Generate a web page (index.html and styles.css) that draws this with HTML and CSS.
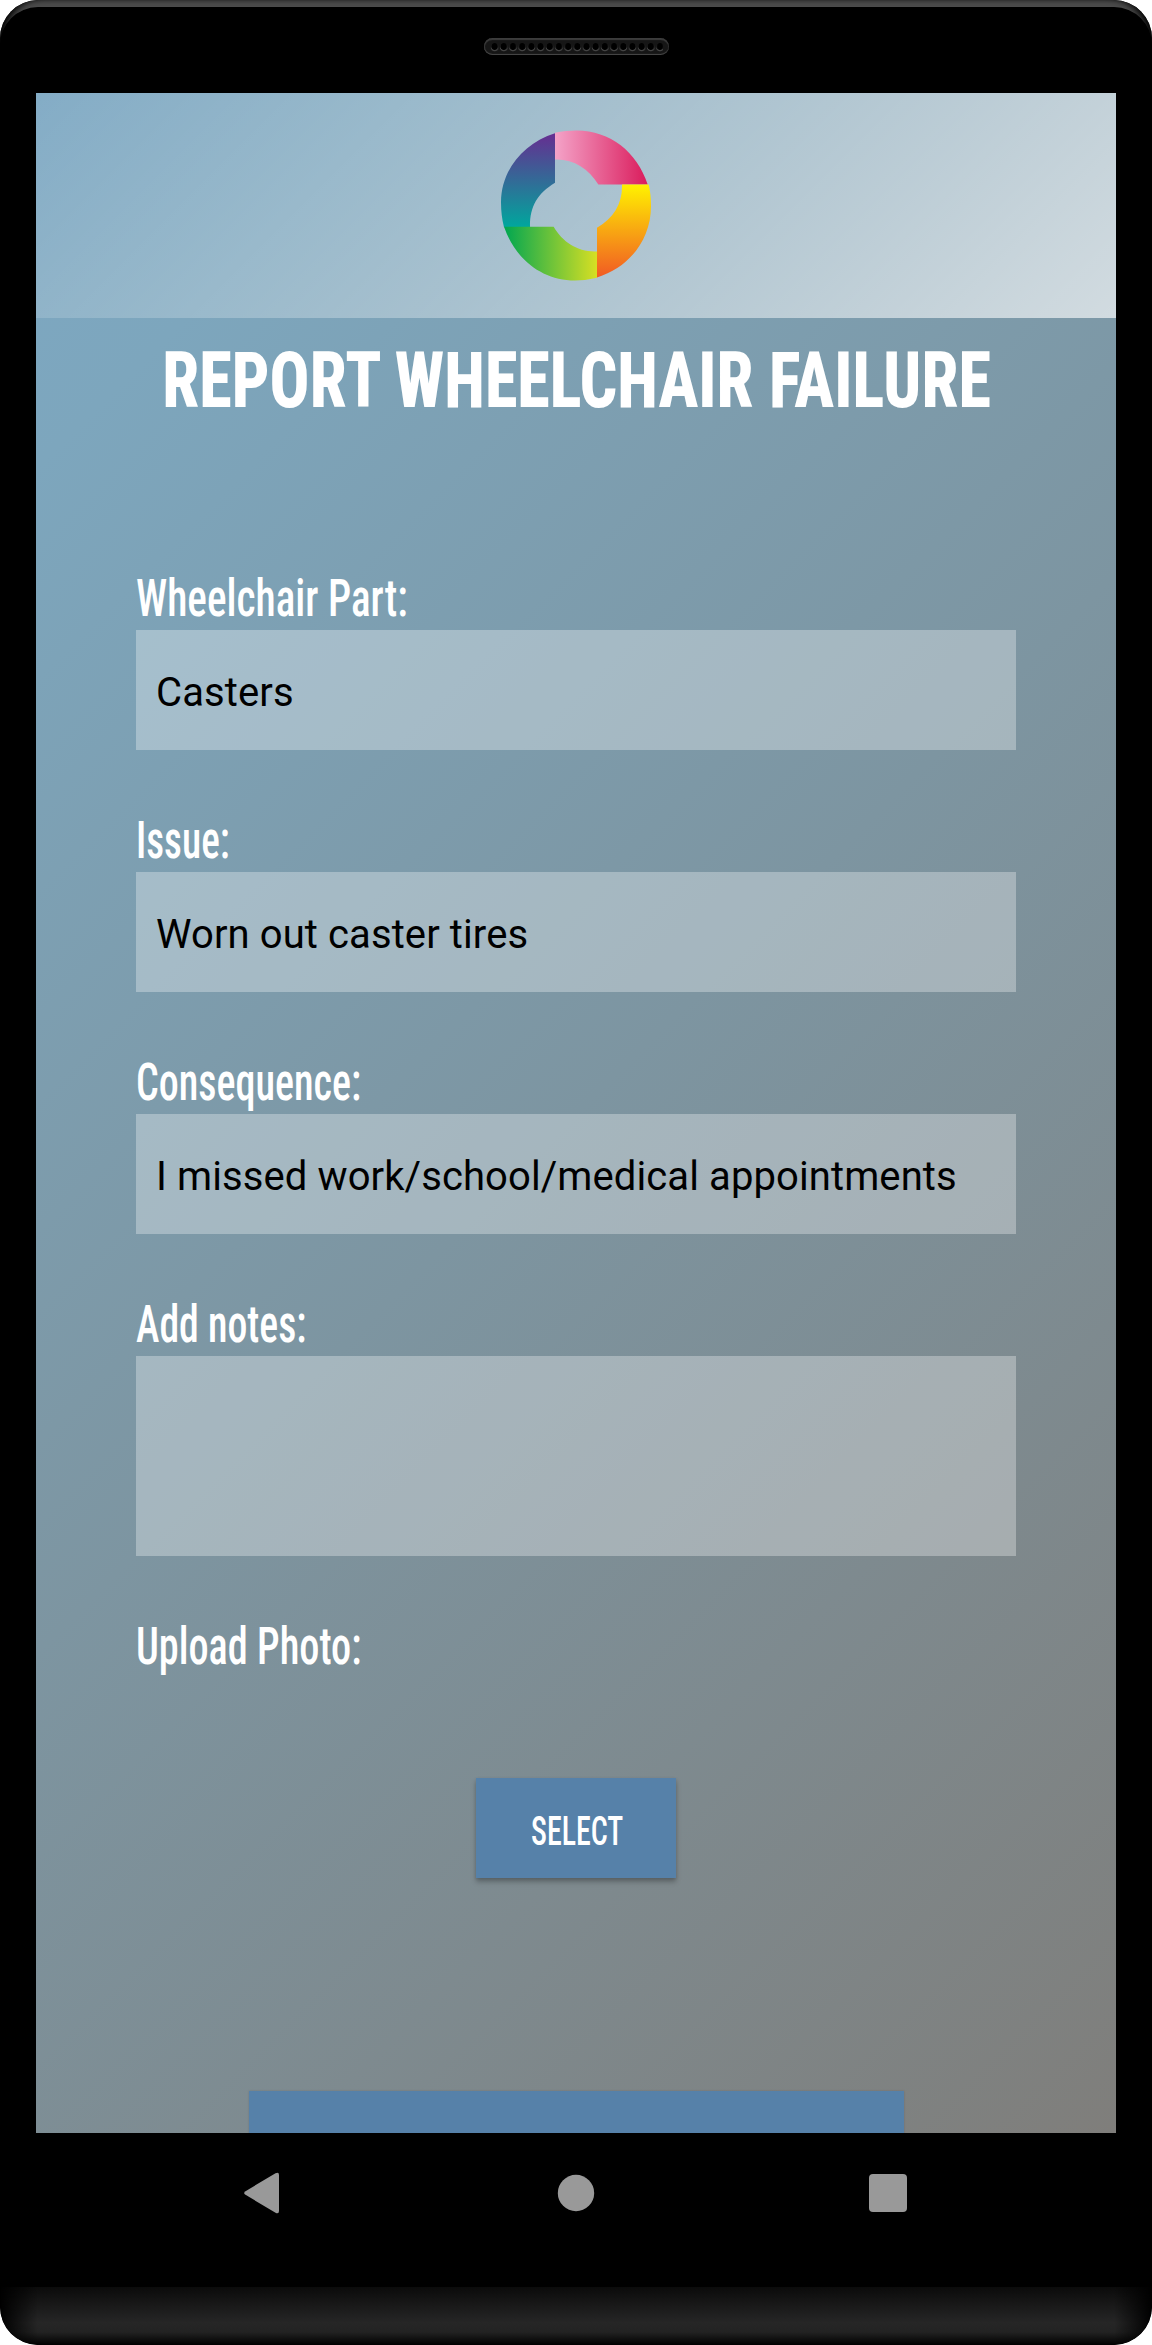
FILE: index.html
```html
<!DOCTYPE html>
<html lang="en">
<head>
<meta charset="utf-8">
<title>Report Wheelchair Failure</title>
<link rel="stylesheet" href="styles.css">
</head>
<body>
<div class="phone">
  <div class="phone-top"><div class="speaker"><div class="speaker-holes"></div></div></div>
  <main class="screen">
    <header class="app-header">
      <svg class="logo" viewBox="60 58.5 456 456" aria-hidden="true">
        <defs>
          <linearGradient id="pink"><stop offset="0" stop-color="#f4a3c8"/><stop offset="1" stop-color="#da1c5c"/></linearGradient>
          <linearGradient id="yellow" x2="0" y2="1"><stop offset="0" stop-color="#fff200"/><stop offset="1" stop-color="#f15a24"/></linearGradient>
          <linearGradient id="green"><stop offset="0" stop-color="#00a651"/><stop offset="1" stop-color="#d7df23"/></linearGradient>
          <linearGradient id="purple" x2="0" y2="1"><stop offset="0" stop-color="#662d91"/><stop offset="1" stop-color="#00a79d"/></linearGradient>
        </defs>
        <path fill="url(#purple)" d="M225 68C130 98 63 180 63 275Q63 315 72 350H150C149 290 171 250 225 217Z"/>
        <path fill="url(#pink)" d="M225 67C245 62 270 60 290 60C390 60 472 125 503 222H355C325 174 280 145 225 147Z"/>
        <path fill="url(#yellow)" d="M426 222H506Q513 250 513 287C513 385 450 470 351 501V352C402 322 428 278 426 222Z"/>
        <path fill="url(#green)" d="M72 349H221C248 396 296 426 351 423V502Q320 510 285 510C185 510 105 445 72 349Z"/>
      </svg>
    </header>
    <h1 class="title"><span class="narrow">REPORT WHEELCHAIR FAILURE</span></h1>
    <form class="form">
      <div class="field">
        <label class="label"><span class="narrow part">Wheelchair Part:</span></label>
        <div class="input">Casters</div>
      </div>
      <div class="field">
        <label class="label"><span class="narrow issue">Issue:</span></label>
        <div class="input">Worn out caster tires</div>
      </div>
      <div class="field">
        <label class="label"><span class="narrow consequence">Consequence:</span></label>
        <div class="input">I missed work/school/medical appointments</div>
      </div>
      <div class="field">
        <label class="label"><span class="narrow notes">Add notes:</span></label>
        <div class="input input-notes"></div>
      </div>
      <div class="field">
        <label class="label"><span class="narrow photo">Upload Photo:</span></label>
      </div>
    </form>
    <div class="button select"><span class="narrow">SELECT</span></div>
    <div class="button submit"></div>
  </main>
  <nav class="nav">
    <svg class="nav-icon" viewBox="0 0 44 44"><path fill="#999" d="M3.500 20.200 33.500 2.200Q37 .5 37 4V40Q37 43.500 33.500 41.800L3.500 23.800Q.8 22 3.500 20.200Z"/></svg>
    <svg class="nav-icon" viewBox="0 0 44 44"><circle cx="22" cy="22" r="18.200" fill="#999"/></svg>
    <svg class="nav-icon" viewBox="0 0 44 44"><rect x="3" y="3" width="38" height="38" rx="4" fill="#999"/></svg>
  </nav>
  <div class="chin"></div>
</div>
</body>
</html>
```
FILE: styles.css
```css
* { box-sizing: border-box; }
body { margin: 0; background: #fff; font-family: Roboto, sans-serif; }

.phone {
  display: flex;
  flex-direction: column;
  width: 1152px;
  height: 2345px;
  overflow: hidden;
  border-radius: 38px;
  background: #000;
}
.phone-top {
  flex: none;
  display: flex;
  justify-content: center;
  height: 93px;
  padding-top: 38px;
  border-radius: 38px 38px 0 0;
  box-shadow: inset 8px 0 7px -3px #000, inset -8px 0 7px -3px #000, inset 0 7px 0 #4b4b4b;
}
.speaker {
  width: 185px;
  height: 17px;
  padding: 2px 6px;
  border-radius: 9px;
  background: #161616;
  box-shadow: inset 0 2px 1px #3c3c3c, inset 0 -1px 1px #4a4a4a, inset 1px 0 1px #2c2c2c;
}
.speaker-holes {
  height: 14px;
  background: radial-gradient(circle at 4.600px 6.500px, #000 3px, transparent 3.800px),
    radial-gradient(circle at 4.600px 7.500px, #444 3.400px, transparent 4.200px);
  background-size: 9.200px 14px;
}

.screen {
  flex: none;
  display: flex;
  flex-direction: column;
  align-items: center;
  width: 1080px;
  height: 2040px;
  margin: 0 36px;
  overflow: hidden;
  background: linear-gradient(135deg, #7da8c3 0%, #7da6bd 12%, #7d95a1 50%, #7f7e7b 100%);
}
.app-header {
  flex: none;
  display: flex;
  align-items: center;
  justify-content: center;
  width: 100%;
  height: 225px;
  background: linear-gradient(135deg, rgba(255,255,255,.05), rgba(255,255,255,.4) 60%, rgba(255,255,255,.65));
}
.logo { width: 152px; height: 152px; }

.title {
  flex: none;
  margin: 3px 0 0;
  color: #fff;
  font-size: 78px;
  font-weight: 800;
  line-height: 120px;
  white-space: nowrap;
}
.narrow { display: inline-block; font-stretch: 75%; }
.title .narrow { transform: translateX(1px) scaleX(.85); }

.form {
  flex: none;
  display: flex;
  flex-direction: column;
  gap: 62px;
  width: 880px;
  margin-top: 129px;
}
.label {
  display: block;
  height: 60px;
  color: #fff;
  font-size: 51px;
  font-weight: 500;
  line-height: 58px;
}
.label .narrow { transform-origin: left; }
.part { transform: scaleX(.81); }
.issue { transform: scaleX(.77); }
.consequence { transform: scaleX(.785); }
.notes { transform: scaleX(.78); }
.photo { transform: scaleX(.79); }

.input {
  height: 120px;
  padding: 3px 20px 0;
  background: rgba(255,255,255,.31);
  color: #000;
  font-size: 40px;
  line-height: 120px;
  letter-spacing: .1px;
  white-space: nowrap;
}
.input-notes { height: 200px; }

.button { flex: none; background: #5681a9; }
.select {
  width: 200px;
  height: 100px;
  margin-top: 100px;
  padding-top: 6px;
  color: #fff;
  font-size: 41px;
  font-weight: 500;
  line-height: 94px;
  text-align: center;
  box-shadow: 0 4px 5px rgba(0,0,0,.25), 0 1px 3px rgba(0,0,0,.1);
}
.select .narrow { transform: translateX(1px) scaleX(.73); }
.submit { width: 655px; height: 100px; margin-top: 213px; box-shadow: 0 0 2px rgba(0,0,0,.15); }

.nav {
  flex: none;
  display: flex;
  justify-content: space-between;
  height: 154px;
  padding: 38px 242px 0;
}
.nav-icon { width: 44px; height: 44px; }
.chin {
  flex: none;
  height: 58px;
  border-radius: 0 0 38px 38px;
  background: linear-gradient(90deg, #000, transparent 38px, transparent calc(100% - 38px), #000),
    linear-gradient(#0b0b0b, #262626 62%, #222 78%, #000);
}
```
